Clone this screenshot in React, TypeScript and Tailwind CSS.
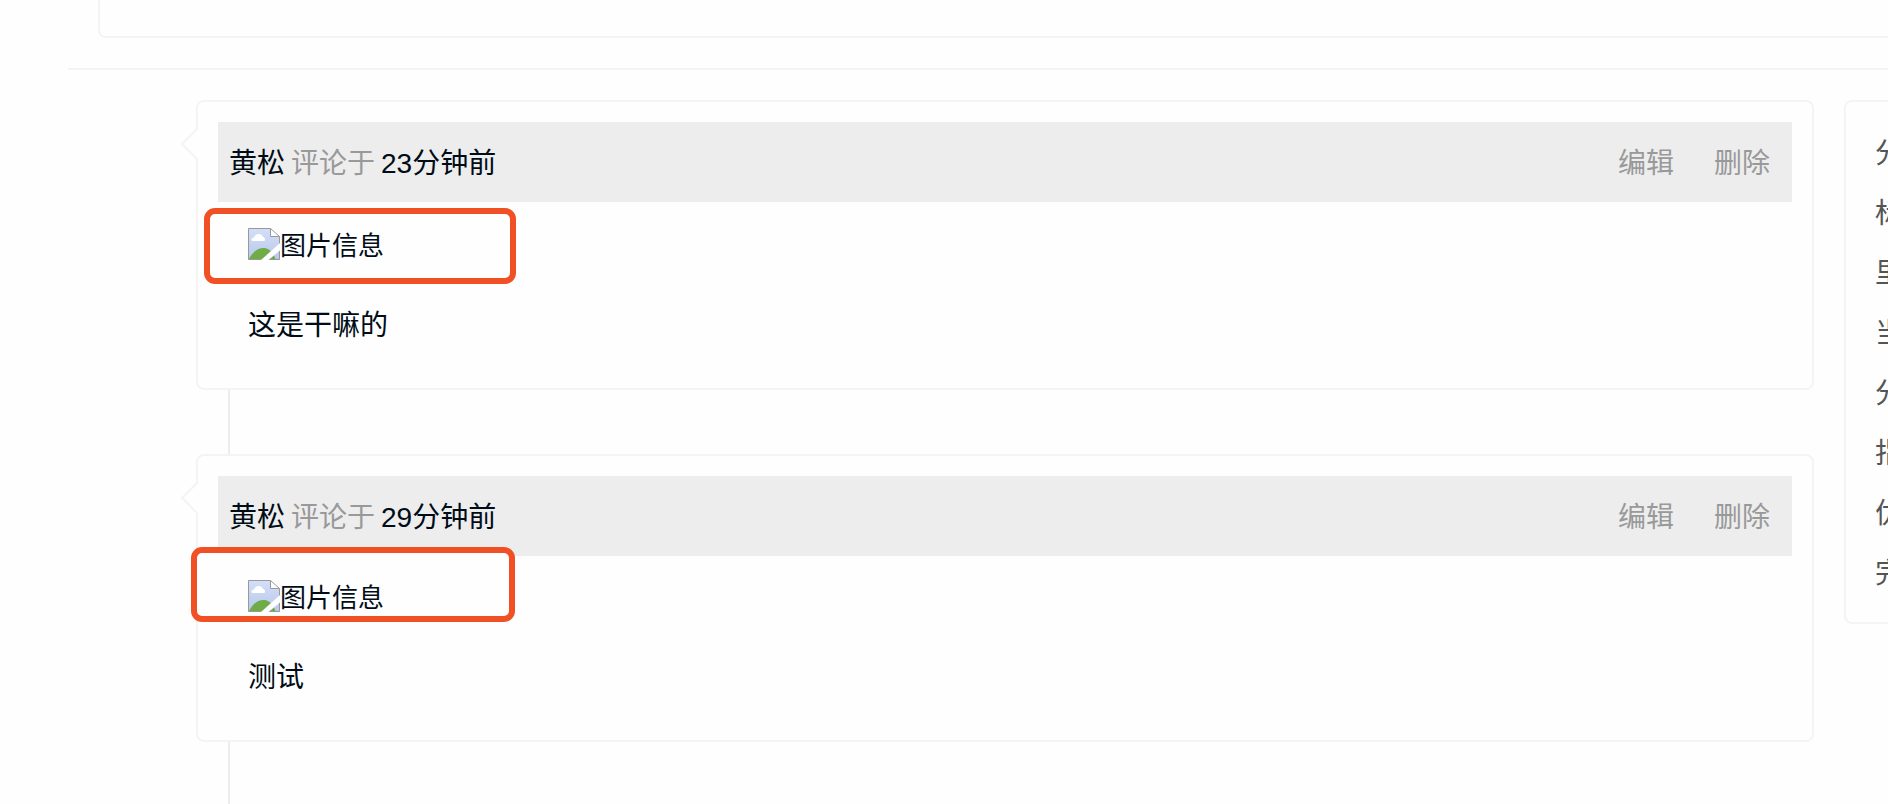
interface Comment {
  id: number;
  author: string;
  time: string;
  alt: string;
  content: string;
  markClass: string;
  bodyClass: string;
}

const comments: Comment[] = [
  {
    id: 1,
    author: '黄松',
    time: '23分钟前',
    alt: '图片信息',
    content: '这是干嘛的',
    markClass: 'top-[106px] left-[6px] w-[312px] h-[76px]',
    bodyClass: 'pt-[22px]',
  },
  {
    id: 2,
    author: '黄松',
    time: '29分钟前',
    alt: '图片信息',
    content: '测试',
    markClass: 'top-[91px] -left-[7px] w-[324px] h-[75px]',
    bodyClass: 'pt-5',
  },
];

const sideFields = ['分', '标', '里', '当', '分', '指', '优', '完'];

const BrokenImage = ({ alt }: { alt: string }) => (
  <span className="flex items-center text-[26px] leading-9">
    <svg width="32" height="32" viewBox="0 0 32 32" className="shrink-0" aria-hidden="true">
      <defs>
        <linearGradient id="sky" x1="0" y1="0" x2="0" y2="1">
          <stop offset="0" stopColor="#d3dff8" />
          <stop offset="1" stopColor="#b7c8ec" />
        </linearGradient>
      </defs>
      <path d="M0.5 0.5H22.5L31.5 8.5V31.5H0.5Z" fill="url(#sky)" />
      <path
        d="M4.5 13C2.8 13 3 9.6 6 9.6C6.4 7.4 8.4 6 10.8 6C13.4 6 14.6 7.6 15 9C17.2 9 17.8 13 15.6 13Z"
        fill="#fff"
      />
      <path d="M1 31C4.500 24 9.500 20 15.500 20C20 20 24 22.500 27.500 31Z" fill="#6fac48" />
      <path d="M22.500 0.500V8.500H31.500Z" fill="#fff" />
      <path d="M0.500 31.500V0.500H22.500L31.500 8.500V31.500Z" fill="none" stroke="#999" />
      <path d="M22.500 0.500V8.500H31.500" fill="none" stroke="#999" />
      <path d="M13 32L32 15V22.500L20.500 32Z" fill="#fefefe" />
    </svg>
    <span className="pt-1">{alt}</span>
  </span>
);

const CommentCard = ({ comment }: { comment: Comment }) => (
  <article className="relative rounded-lg border-2 border-[#f4f4f4] bg-[#fefefe] p-5">
    <svg
      width="18"
      height="32"
      viewBox="0 0 18 32"
      className="absolute top-[26px] -left-[18px]"
      aria-hidden="true"
    >
      <path d="M17 1L2 16L17 31" fill="#fefefe" />
      <path d="M17 2V30" stroke="#fefefe" strokeWidth="2" />
      <path d="M17 1L2 16L17 31" fill="none" stroke="#f4f4f4" strokeWidth="2" />
    </svg>

    <header className="flex h-20 items-center justify-between bg-[#ededed] pt-1 pr-[22px] pl-[11px]">
      <p className="flex gap-1.5">
        <span>{comment.author}</span>
        <span className="text-[#999]">评论于</span>
        <time>{comment.time}</time>
      </p>
      <div className="flex gap-10 text-[#999]">
        <button type="button">编辑</button>
        <button type="button">删除</button>
      </div>
    </header>

    {/* Highlight frame around the missing image */}
    <div
      className={`absolute rounded-[11px] border-6 border-[#f05024] bg-[#fefefe] ${comment.markClass}`}
    />

    <div className={`relative px-[30px] pb-[22px] ${comment.bodyClass}`}>
      <BrokenImage alt={comment.alt} />
      <p className="mt-[42px] leading-10">{comment.content}</p>
    </div>
  </article>
);

const App = () => {
  return (
    <div className="min-h-screen overflow-hidden bg-[#fefefe] font-['Liberation_Sans','Noto_Sans_CJK_SC',sans-serif] text-[28px] leading-10 text-[#000c16]">
      <div className="-mr-2 ml-[98px] h-[38px] rounded-bl-lg border-b-2 border-l-2 border-[#f4f4f4]" />
      <hr className="mt-[30px] ml-[68px] border-t-2 border-[#f4f4f4]" />

      <div className="mt-[30px] ml-[196px] flex items-start gap-[30px]">
        <main className="min-w-0 flex-1">
          {comments.map((comment) => (
            <div key={comment.id}>
              <CommentCard comment={comment} />
              <div className="ml-8 h-16 border-l-2 border-[#ededed]" />
            </div>
          ))}
        </main>

        <aside className="-mr-[276px] w-80 shrink-0 rounded-lg border-2 border-[#f4f4f4] pt-[22px] pb-[18px] pl-[29px] text-[#555]">
          <ul>
            {sideFields.map((field, index) => (
              <li key={index} className="leading-[60px]">
                {field}
              </li>
            ))}
          </ul>
        </aside>
      </div>
    </div>
  );
};

export default App;
